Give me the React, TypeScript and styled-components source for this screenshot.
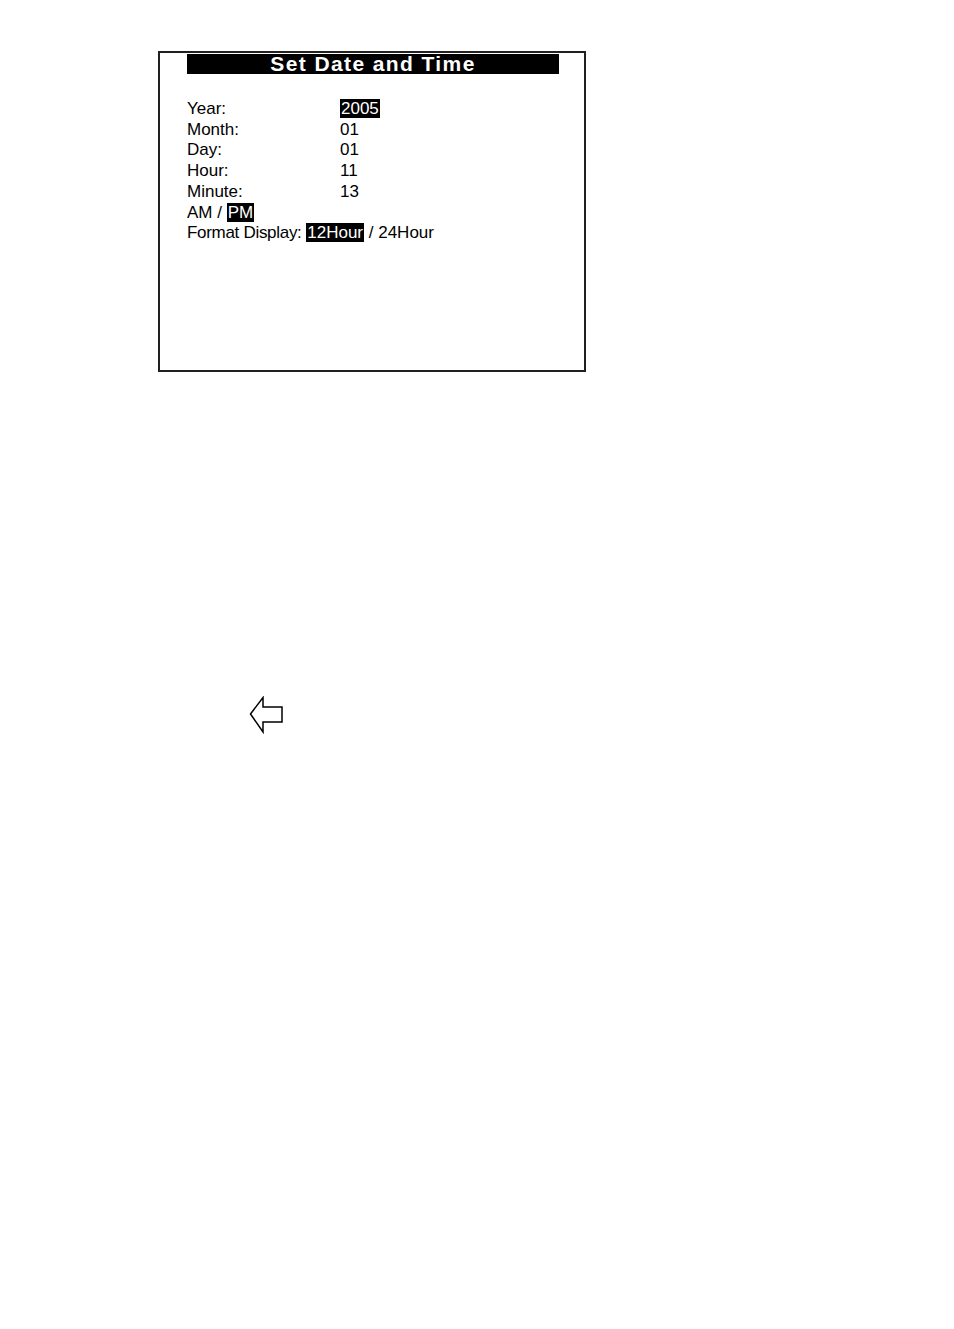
import React from "react"
import styled, { createGlobalStyle } from "styled-components"

const GlobalStyle = createGlobalStyle`
  html, body {
    margin: 0;
    padding: 0;
    background: #fff;
  }
  body {
    font-family: "Liberation Sans", Arial, sans-serif;
    color: #000;
  }
`

const Page = styled.div`
  width: 954px;
  min-height: 1329px;
  padding: 51px 0 0 158px;
  box-sizing: border-box;
  display: flex;
  flex-direction: column;
  align-items: flex-start;
`

const Screen = styled.div`
  width: 428px;
  height: 321px;
  box-sizing: border-box;
  border: 2px solid #231f20;
  padding: 1px 0 0 27px;
  display: flex;
  flex-direction: column;
`

const TitleBar = styled.div`
  width: 372px;
  height: 20px;
  background: #000;
  color: #fff;
  font-weight: bold;
  font-size: 21px;
  letter-spacing: 1.4px;
  line-height: 20px;
  text-align: center;
  white-space: nowrap;
`

const Fields = styled.div`
  margin-top: 25px;
  display: grid;
  grid-template-columns: 153px auto;
  font-size: 17px;
  line-height: 20.7px;
  white-space: nowrap;
`

const Label = styled.div``

const Value = styled.div``

const FullRow = styled.div`
  grid-column: 1 / span 2;
`

const Tight = styled.span`
  letter-spacing: -0.3px;
`

const Selected = styled.span`
  background: #000;
  color: #fff;
  padding: 0 1px;
`

const BackArrow = styled.svg`
  margin: 324px 0 0 91px;
  display: block;
`

export default function App() {
  const rows: [string, React.ReactNode][] = [
    ["Year:", <Selected>2005</Selected>],
    ["Month:", "01"],
    ["Day:", "01"],
    ["Hour:", "11"],
    ["Minute:", "13"],
  ]
  return (
    <>
      <GlobalStyle />
      <Page>
        <Screen>
          <TitleBar>Set Date and Time</TitleBar>
          <Fields>
            {rows.map(([label, value]) => (
              <React.Fragment key={label}>
                <Label>{label}</Label>
                <Value>{value}</Value>
              </React.Fragment>
            ))}
            <FullRow>
              AM / <Selected>PM</Selected>
            </FullRow>
            <FullRow>
              <Tight>Format Display:</Tight> <Selected>12Hour</Selected> / 24Hour
            </FullRow>
          </Fields>
        </Screen>
        <BackArrow width="36" height="38" viewBox="0 0 36 38">
          <path
            d="M1.5 18 L14 1.5 L14 11 L33 11 L33 26 L14 26 L14 36 Z"
            fill="#fff"
            stroke="#000"
            strokeWidth="1.5"
            strokeLinejoin="miter"
          />
        </BackArrow>
      </Page>
    </>
  )
}
